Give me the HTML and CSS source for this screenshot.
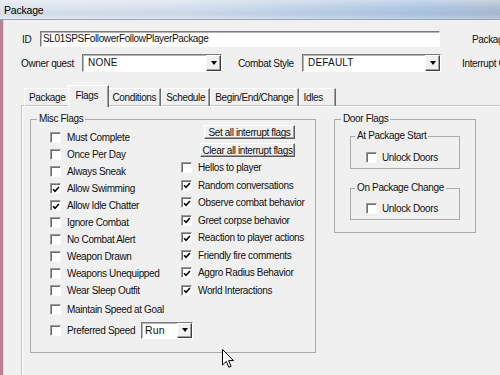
FILE: index.html
```html
<!DOCTYPE html>
<html lang="en">
<head>
    <meta charset="UTF-8">
    <title>Package</title>
    <link rel="stylesheet" href="styles.css">
</head>
<body>
    <div class="titlebar">Package</div>

    <div class="frame">
        <div class="dialog">
            <div class="row row-id">
                <span class="lbl-id">ID</span>
                <div class="edit edit-id">SL01SPSFollowerFollowPlayerPackage</div>
                <span class="lbl-pack">Package Template</span>
            </div>

            <div class="row row-owner">
                <span class="lbl-owner">Owner quest</span>
                <div class="combo combo-owner"><span class="value">NONE</span><i class="drop"></i></div>
                <span class="lbl-style">Combat Style</span>
                <div class="combo combo-style"><span class="value">DEFAULT</span><i class="drop"></i></div>
                <span class="lbl-int">Interrupt Override</span>
            </div>

            <div class="tabs">
                <div class="tab">Package</div>
                <div class="tab active">Flags</div>
                <div class="tab">Conditions</div>
                <div class="tab">Schedule</div>
                <div class="tab">Begin/End/Change</div>
                <div class="tab">Idles</div>
            </div>

            <div class="panel">
                <fieldset class="group misc">
                    <legend>Misc Flags</legend>
                    <div class="misc-body">
                        <div class="left-col">
                            <div class="cb-row"><i class="box"></i>Must Complete</div>
                            <div class="cb-row"><i class="box"></i>Once Per Day</div>
                            <div class="cb-row"><i class="box"></i>Always Sneak</div>
                            <div class="cb-row"><i class="box checked"></i>Allow Swimming</div>
                            <div class="cb-row"><i class="box checked"></i>Allow Idle Chatter</div>
                            <div class="cb-row"><i class="box"></i>Ignore Combat</div>
                            <div class="cb-row"><i class="box"></i>No Combat Alert</div>
                            <div class="cb-row"><i class="box"></i>Weapon Drawn</div>
                            <div class="cb-row"><i class="box"></i>Weapons Unequipped</div>
                            <div class="cb-row"><i class="box"></i>Wear Sleep Outfit</div>
                            <div class="cb-row row-gap"><i class="box"></i>Maintain Speed at Goal</div>
                            <div class="cb-row row-gap row-speed">
                                <i class="box"></i><span class="lbl-speed">Preferred Speed</span>
                                <div class="combo combo-run"><span class="value">Run</span><i class="drop"></i></div>
                            </div>
                        </div>
                        <div class="right-col">
                            <button class="btn btn-set">Set all interrupt flags</button>
                            <button class="btn btn-clear">Clear all interrupt flags</button>
                            <div class="right-rows">
                                <div class="cb-row"><i class="box"></i>Hellos to player</div>
                                <div class="cb-row"><i class="box checked"></i>Random conversations</div>
                                <div class="cb-row"><i class="box checked"></i>Observe combat behavior</div>
                                <div class="cb-row"><i class="box checked"></i>Greet corpse behavior</div>
                                <div class="cb-row"><i class="box checked"></i>Reaction to player actions</div>
                                <div class="cb-row"><i class="box checked"></i>Friendly fire comments</div>
                                <div class="cb-row"><i class="box checked"></i>Aggro Radius Behavior</div>
                                <div class="cb-row"><i class="box checked"></i>World Interactions</div>
                            </div>
                        </div>
                    </div>
                </fieldset>

                <fieldset class="group door">
                    <legend>Door Flags</legend>
                    <div class="door-body">
                        <fieldset class="group inner inner-start">
                            <legend>At Package Start</legend>
                            <div class="cb-row door-row"><i class="box"></i>Unlock Doors</div>
                        </fieldset>
                        <fieldset class="group inner inner-change">
                            <legend>On Package Change</legend>
                            <div class="cb-row door-row"><i class="box"></i>Unlock Doors</div>
                        </fieldset>
                    </div>
                </fieldset>
            </div>
        </div>
    </div>

    <svg class="cursor" width="13" height="20" viewBox="0 0 13 20">
        <path d="M0.5 0.5 L0.5 16 L4.3 12.4 L6.9 18.3 L9.1 17.3 L6.6 11.6 L11.5 11.6 Z" fill="#fff" stroke="#000" stroke-width="1" stroke-linejoin="miter"/>
    </svg>

    <script>
        // draw the check marks into the ticked boxes
        document.querySelectorAll('.box.checked').forEach(box => {
            box.innerHTML = '<svg width="9" height="9" viewBox="0 0 9 9"><polyline points="1.2,4.2 3.4,6.6 7.8,1.6" fill="none" stroke="#000" stroke-width="1.7"/></svg>';
        });
    </script>
</body>
</html>
```

FILE: styles.css
```css
* {
    box-sizing: border-box;
}

body {
    margin: 0;
    width: 500px;
    height: 375px;
    overflow: hidden;
    position: relative;
    font-family: "Liberation Sans", Arial, sans-serif;
    font-size: 10px;
    letter-spacing: -0.35px;
    color: #111;
    background: #f0f0f0;
}

.titlebar {
    height: 20px;
    padding: 3px 0 0 4px;
    font-size: 10.5px;
    line-height: 14px;
    color: #000;
    letter-spacing: -0.2px;
    border-bottom: 1px solid #97a5b6;
    background:
        linear-gradient(to bottom, rgba(255, 255, 255, 0.35), rgba(255, 255, 255, 0) 40%, rgba(120, 150, 190, 0.12) 75%, rgba(255, 255, 255, 0.2)),
        linear-gradient(to right, #dfe6ee 0%, #d6e0ec 35%, #c2d3e8 60%, #adc5e2 85%, #aebdd0 100%);
}

.frame {
    display: flex;
    height: 355px;
    border-left: 3px solid #b3828f;
}

.dialog {
    flex: 1;
    border-left: 1px solid #d3dbe4;
    padding: 11px 0 0 17px;
    background: #f0f0f0;
}

.row {
    display: flex;
    align-items: center;
    white-space: nowrap;
}

.row-id {
    height: 16px;
}

.lbl-id {
    width: 19px;
    padding-left: 1px;
}

.edit {
    height: 16px;
    background: #fff;
    border: 1px solid;
    border-color: #7a7a7a #fff #fff #7a7a7a;
    box-shadow: inset 1px 1px 0 #b4b4b4;
    padding-left: 2px;
    line-height: 14px;
}

.edit-id {
    width: 400px;
}

.lbl-pack {
    margin-left: 32px;
}

.row-owner {
    margin-top: 7px;
    height: 18px;
}

.lbl-owner {
    width: 61px;
}

.combo {
    display: flex;
    flex: none;
    height: 18px;
    background: #fff;
    border: 1px solid;
    border-color: #7a7a7a #fff #fff #7a7a7a;
    box-shadow: inset 1px 1px 0 #b4b4b4;
    letter-spacing: 0.2px;
}

.combo .value {
    flex: 1;
    padding-left: 5px;
    line-height: 16px;
}

.drop {
    width: 15px;
    display: flex;
    align-items: center;
    justify-content: center;
    background: #f0f0f0;
    border: 1px solid;
    border-color: #fff #404040 #404040 #fff;
    box-shadow: inset -1px -1px 0 #a0a0a0;
}

.drop::after {
    content: "";
    border-top: 4px solid #000;
    border-left: 3.5px solid transparent;
    border-right: 3.5px solid transparent;
}

.combo-owner {
    width: 140px;
}

.lbl-style {
    margin-left: 16px;
    width: 64px;
}

.combo-style {
    width: 139px;
}

.lbl-int {
    margin-left: 21px;
}

.tabs {
    display: flex;
    align-items: flex-start;
    height: 21px;
    margin-top: 13px;
    padding-left: 3px;
    position: relative;
    z-index: 1;
    white-space: nowrap;
}

.tab {
    height: 18px;
    min-width: 37px;
    margin-top: 3px;
    padding: 0 4px;
    line-height: 17px;
    border-top: 1px solid #fff;
    border-left: 1px solid #fff;
    border-right: 1px solid #696969;
    box-shadow: inset -1px 0 0 #a0a0a0;
}

.tab.active {
    height: 22px;
    min-width: 41px;
    margin: 0 -2px 0 -2px;
    padding: 1px 6px 0;
    line-height: 18px;
    background: #f0f0f0;
    position: relative;
}

.panel {
    display: flex;
    align-items: flex-start;
    height: 270px;
    margin-left: 1px;
    padding: 7px 0 0 7px;
    border-top: 1px solid #fff;
    border-left: 1px solid #fff;
    box-shadow: -1px -1px 0 #c4c4c4;
}

.group {
    margin: 0;
    padding: 0;
    min-width: 0;
    border: 1px solid #a9a9a9;
}

.group legend {
    margin-left: 6px;
    padding: 0 2px;
    line-height: 10px;
}

.misc {
    width: 286px;
    height: 239px;
}

.misc-body {
    display: flex;
    padding-left: 19px;
}

.left-col {
    width: 131px;
    padding-top: 5px;
}

.cb-row {
    display: flex;
    align-items: center;
    height: 17px;
    white-space: nowrap;
}

.row-gap {
    margin-top: 2px;
}

.row-speed {
    height: 20px;
}

.lbl-speed {
    flex: none;
    width: 74px;
}

.combo-run {
    width: 52px;
    height: 17px;
}

.combo-run .value {
    padding-left: 3px;
    line-height: 15px;
    font-size: 10.5px;
}

.box {
    flex: none;
    width: 11px;
    height: 11px;
    margin-right: 6px;
    background: #fff;
    border: 1px solid;
    border-color: #9a9a9a #fafafa #fafafa #9a9a9a;
    box-shadow: inset 1px 1px 0 #6e6e6e;
    display: flex;
    align-items: center;
    justify-content: center;
}

.box svg {
    display: block;
    margin: 1px 0 0 1px;
}

.right-col {
    width: 114px;
    display: flex;
    flex-direction: column;
    align-items: flex-start;
    padding-top: 1px;
}

.btn {
    align-self: flex-end;
    height: 14px;
    padding: 0;
    font: inherit;
    letter-spacing: -0.4px;
    color: #111;
    line-height: 11px;
    background: #f0f0f0;
    border: 1px solid;
    border-color: #fff #5a5a5a #5a5a5a #fff;
    box-shadow: inset -1px -1px 0 #a0a0a0;
    white-space: nowrap;
}

.btn-set {
    width: 91px;
}

.btn-clear {
    width: 95px;
    margin-top: 4px;
}

.right-rows {
    margin-top: 2px;
}

.right-rows .cb-row {
    height: 17.5px;
}

.door {
    width: 142px;
    height: 119px;
    margin-left: 18px;
}

.door-body {
    padding: 7px 0 0 15px;
}

.inner {
    width: 110px;
}

.inner legend {
    margin-left: 4px;
}

.inner-start {
    height: 38px;
    padding-top: 8px;
}

.inner-change {
    height: 37px;
    margin-top: 14px;
    padding-top: 7px;
}

.door-row {
    padding-left: 15px;
}

.door-row .box {
    margin-right: 5px;
}

.cursor {
    position: absolute;
    left: 222px;
    top: 349px;
}
```
